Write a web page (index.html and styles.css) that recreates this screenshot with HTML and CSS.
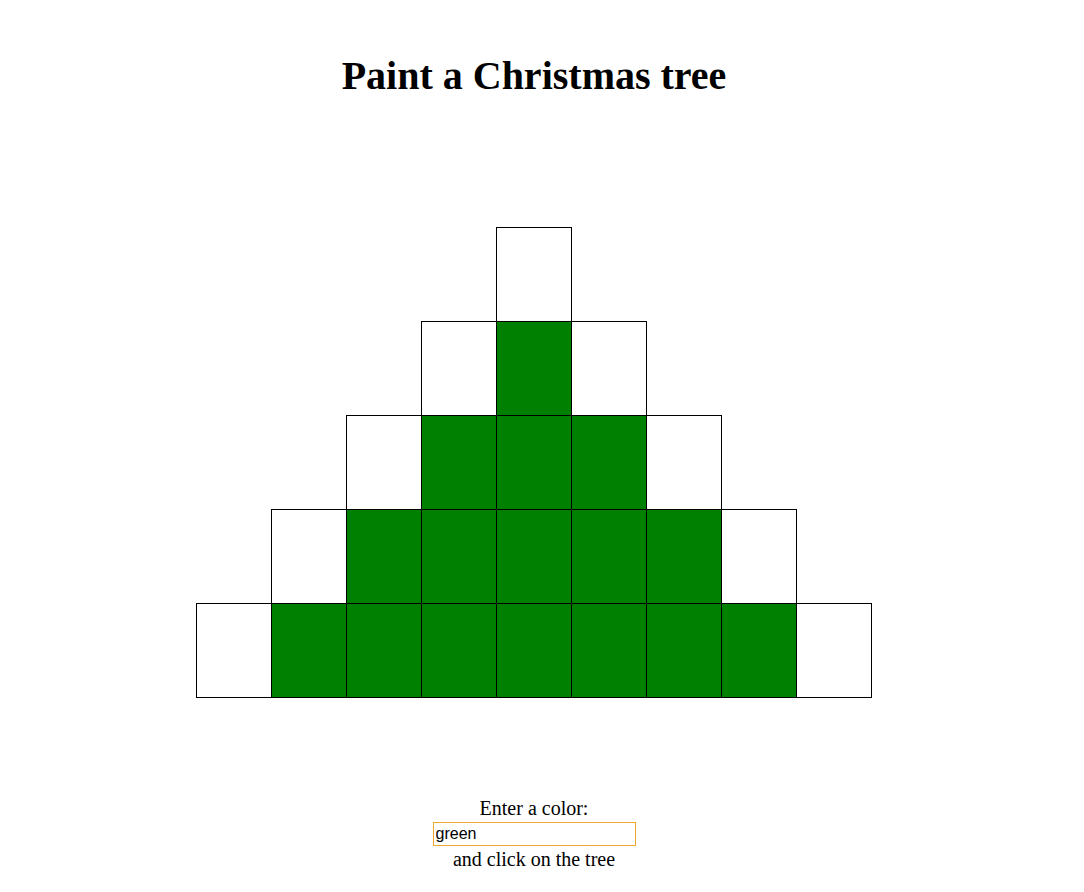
FILE: index.html
```html
<!DOCTYPE html>
<html>
<head>
<meta charset="utf-8">
<title>Paint a Christmas tree</title>
<link rel="stylesheet" href="styles.css">
</head>
<body>
<div class="page">
  <h1 class="title">Paint a Christmas tree</h1>
  <div class="tree">
    <div class="row">
      <div class="cell"></div>
    </div>
    <div class="row">
      <div class="cell"></div><div class="cell green"></div><div class="cell"></div>
    </div>
    <div class="row">
      <div class="cell"></div><div class="cell green"></div><div class="cell green"></div><div class="cell green"></div><div class="cell"></div>
    </div>
    <div class="row">
      <div class="cell"></div><div class="cell green"></div><div class="cell green"></div><div class="cell green"></div><div class="cell green"></div><div class="cell green"></div><div class="cell"></div>
    </div>
    <div class="row">
      <div class="cell"></div><div class="cell green"></div><div class="cell green"></div><div class="cell green"></div><div class="cell green"></div><div class="cell green"></div><div class="cell green"></div><div class="cell green"></div><div class="cell"></div>
    </div>
  </div>
  <div class="controls">
    <div class="label">Enter a color:</div>
    <input class="color-input" type="text" value="green">
    <div class="label">and click on the tree</div>
  </div>
</div>
</body>
</html>
```

FILE: styles.css
```css
html, body {
  margin: 0;
  padding: 0;
  background: #fff;
}
body {
  font-family: "Liberation Serif", "Times New Roman", serif;
  color: #000;
}
.page {
  width: 1052px;
  padding: 0 16px 0 8px;
  display: flex;
  flex-direction: column;
  align-items: center;
}
.title {
  font-size: 40px;
  font-weight: bold;
  line-height: 46px;
  margin: 53px 0 0 0;
}
.tree {
  margin-top: 128px;
  display: flex;
  flex-direction: column;
  align-items: center;
}
.row {
  display: flex;
  justify-content: center;
  margin-top: -1px;
}
.row:first-child {
  margin-top: 0;
}
.cell {
  width: 74px;
  height: 93px;
  border: 1px solid #000;
  background: #fff;
  margin-left: -1px;
}
.cell:first-child {
  margin-left: 0;
}
.cell.green {
  background: #008000;
}
.controls {
  margin-top: 99px;
  display: flex;
  flex-direction: column;
  align-items: center;
  font-size: 20px;
  line-height: 23px;
}
.color-input {
  box-sizing: border-box;
  width: 203px;
  height: 24px;
  border: 1px solid #f0a830;
  padding: 0 2px;
  font-family: "Liberation Sans", Arial, sans-serif;
  font-size: 16px;
  color: #000;
  outline: none;
  margin: 2px 0 2px 0;
}
```
